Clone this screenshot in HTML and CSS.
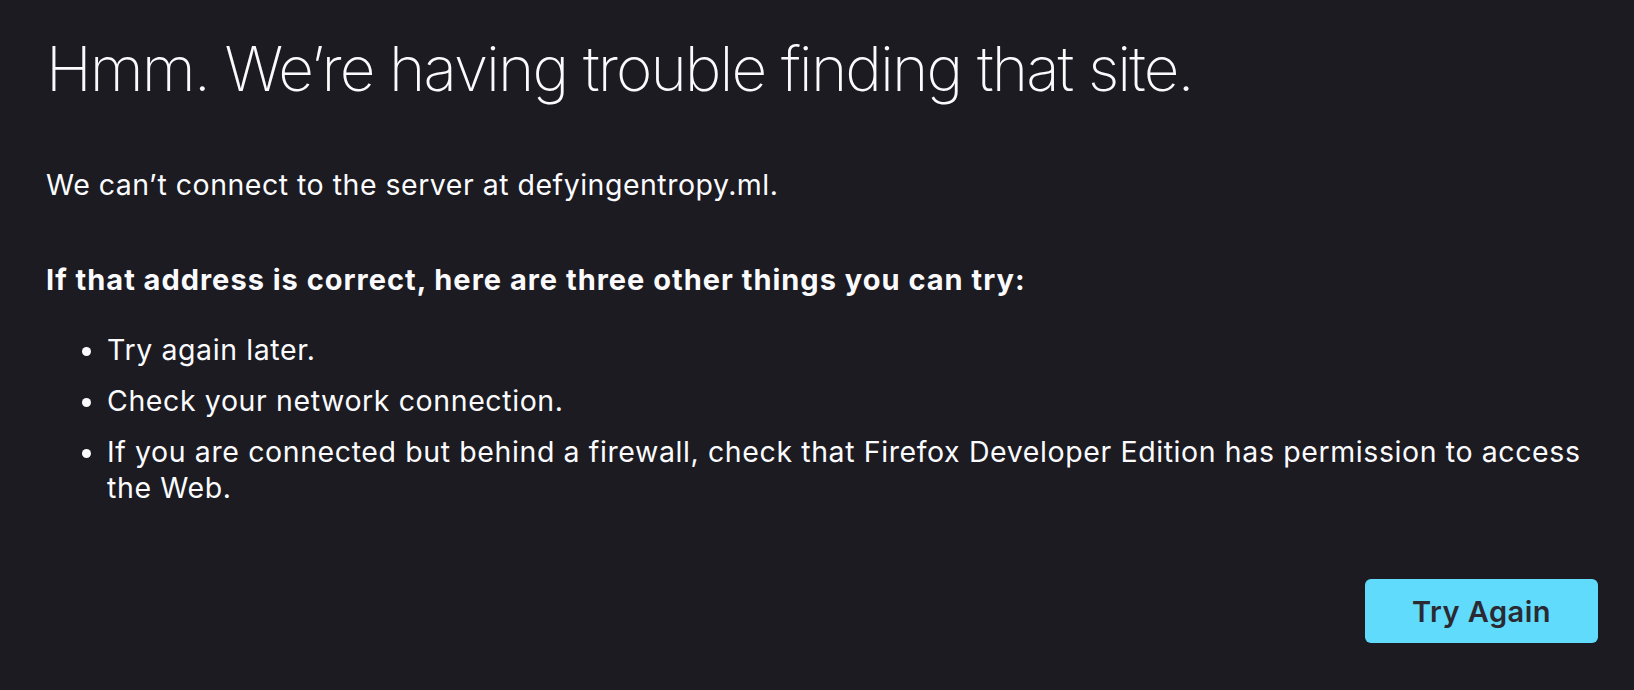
FILE: index.html
```html
<!DOCTYPE html>
<html lang="en">
<head>
<meta charset="utf-8">
<title>Server Not Found</title>
<link rel="stylesheet" href="styles.css">
</head>
<body>
<main class="container">
  <h1 class="title">Hmm. We’re having trouble finding that site.</h1>
  <p class="intro">We can’t connect to the server at defyingentropy.ml.</p>
  <p class="lead">If that address is correct, here are three other things you can try:</p>
  <ul class="tips">
    <li>Try again later.</li>
    <li>Check your network connection.</li>
    <li>If you are connected but behind a firewall, check that Firefox Developer Edition has permission to access the Web.</li>
  </ul>
  <div class="actions">
    <button class="primary">Try Again</button>
  </div>
</main>
</body>
</html>
```

FILE: styles.css
```css
html, body {
  margin: 0;
  padding: 0;
  background: #1c1b22;
  color: #fbfbfe;
  font-family: Inter, "Noto Sans", sans-serif;
  height: 100%;
}

.container {
  width: 1552px;
  margin-left: 46px;
  padding-top: 30px;
}

.title {
  margin: 0;
  font-size: 62px;
  font-weight: 200;
  line-height: 77px;
  letter-spacing: -1.9px;
}

.intro {
  margin: 60px 0 0 0;
  font-size: 28.5px;
  line-height: 36px;
  letter-spacing: 0.5px;
}

.lead {
  margin: 59px 0 0 0;
  font-size: 29px;
  line-height: 36px;
  font-weight: 700;
  letter-spacing: 1px;
}

.tips {
  margin: 34px 0 0 0;
  padding-left: 61px;
  font-size: 28.5px;
  line-height: 36px;
  letter-spacing: 0.6px;
}

.tips li {
  margin-top: 15px;
}

.tips li:first-child {
  margin-top: 0;
}

.actions {
  display: flex;
  justify-content: flex-end;
  margin-top: 73px;
}

.primary {
  width: 233px;
  height: 64px;
  border: none;
  border-radius: 6px;
  background: #60dbfb;
  color: #2b2a33;
  font-family: Inter, "Noto Sans", sans-serif;
  font-size: 29px;
  font-weight: 600;
  letter-spacing: 0.5px;
}
```
